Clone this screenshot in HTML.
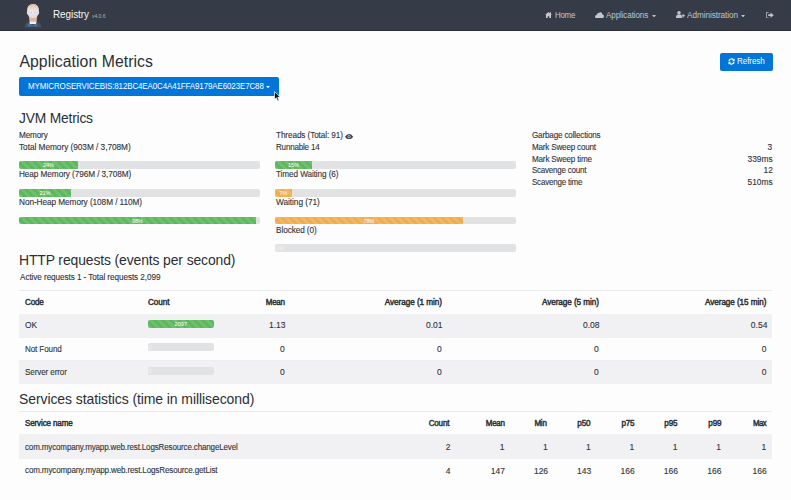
<!DOCTYPE html>
<html><head><meta charset="utf-8">
<style>
*{box-sizing:border-box;margin:0;padding:0}
html,body{width:791px;height:500px;overflow:hidden}
body{background:#fdfdfe;font-family:"Liberation Sans",sans-serif;position:relative}
.t{position:absolute;white-space:nowrap;line-height:0}
.s{-webkit-text-stroke:0.12px currentColor}
</style></head><body>
<div style="position:absolute;left:0px;top:0px;width:791px;height:30px;background:#353c47"></div>
<div style="position:absolute;left:0px;top:30px;width:791px;height:1px;background:#2b303a"></div>
<div style="position:absolute;left:720px;top:53px;width:53px;height:18px;background:#0275d8;border-radius:2px"></div>
<div style="position:absolute;left:19px;top:77px;width:260px;height:19px;background:#0275d8;border-radius:2px"></div>
<div style="position:absolute;left:19px;top:161px;width:241px;height:7.5px;background:#e1e2e4;border-radius:2px"></div>
<div style="position:absolute;left:19px;top:161px;width:59px;height:7.5px;background-color:#5cb85c;background-image:linear-gradient(45deg,rgba(255,255,255,.11) 25%,transparent 25%,transparent 50%,rgba(255,255,255,.11) 50%,rgba(255,255,255,.11) 75%,transparent 75%,transparent);background-size:8px 8px;border-radius:2px 0 0 2px"></div>
<div class="t" style="left:19px;width:59px;text-align:center;top:164.81px;font-size:5.6px;color:#fff">24%</div>
<div style="position:absolute;left:19px;top:189px;width:241px;height:7.5px;background:#e1e2e4;border-radius:2px"></div>
<div style="position:absolute;left:19px;top:189px;width:52px;height:7.5px;background-color:#5cb85c;background-image:linear-gradient(45deg,rgba(255,255,255,.11) 25%,transparent 25%,transparent 50%,rgba(255,255,255,.11) 50%,rgba(255,255,255,.11) 75%,transparent 75%,transparent);background-size:8px 8px;border-radius:2px 0 0 2px"></div>
<div class="t" style="left:19px;width:52px;text-align:center;top:192.81px;font-size:5.6px;color:#fff">21%</div>
<div style="position:absolute;left:19px;top:216.8px;width:241px;height:7.5px;background:#e1e2e4;border-radius:2px"></div>
<div style="position:absolute;left:19px;top:216.8px;width:237px;height:7.5px;background-color:#5cb85c;background-image:linear-gradient(45deg,rgba(255,255,255,.11) 25%,transparent 25%,transparent 50%,rgba(255,255,255,.11) 50%,rgba(255,255,255,.11) 75%,transparent 75%,transparent);background-size:8px 8px;border-radius:2px 0 0 2px"></div>
<div class="t" style="left:19px;width:237px;text-align:center;top:220.61px;font-size:5.6px;color:#fff">98%</div>
<div style="position:absolute;left:275px;top:161px;width:241px;height:7.5px;background:#e1e2e4;border-radius:2px"></div>
<div style="position:absolute;left:275px;top:161px;width:37px;height:7.5px;background-color:#5cb85c;background-image:linear-gradient(45deg,rgba(255,255,255,.11) 25%,transparent 25%,transparent 50%,rgba(255,255,255,.11) 50%,rgba(255,255,255,.11) 75%,transparent 75%,transparent);background-size:8px 8px;border-radius:2px 0 0 2px"></div>
<div class="t" style="left:275px;width:37px;text-align:center;top:164.81px;font-size:5.6px;color:#fff">15%</div>
<div style="position:absolute;left:275px;top:189px;width:241px;height:7.5px;background:#e1e2e4;border-radius:2px"></div>
<div style="position:absolute;left:275px;top:189px;width:17px;height:7.5px;background-color:#f0ad4e;background-image:linear-gradient(45deg,rgba(255,255,255,.11) 25%,transparent 25%,transparent 50%,rgba(255,255,255,.11) 50%,rgba(255,255,255,.11) 75%,transparent 75%,transparent);background-size:8px 8px;border-radius:2px 0 0 2px"></div>
<div class="t" style="left:275px;width:17px;text-align:center;top:192.81px;font-size:5.6px;color:#fff">7%</div>
<div style="position:absolute;left:275px;top:216.8px;width:241px;height:7.5px;background:#e1e2e4;border-radius:2px"></div>
<div style="position:absolute;left:275px;top:216.8px;width:188px;height:7.5px;background-color:#f0ad4e;background-image:linear-gradient(45deg,rgba(255,255,255,.11) 25%,transparent 25%,transparent 50%,rgba(255,255,255,.11) 50%,rgba(255,255,255,.11) 75%,transparent 75%,transparent);background-size:8px 8px;border-radius:2px 0 0 2px"></div>
<div class="t" style="left:275px;width:188px;text-align:center;top:220.61px;font-size:5.6px;color:#fff">78%</div>
<div style="position:absolute;left:275px;top:244.3px;width:241px;height:7.5px;background:#e1e2e4;border-radius:2px"></div>
<div class="t" style="left:276px;top:248.11px;font-size:5.6px;color:#f4f4f4">0%</div>
<div style="position:absolute;left:19px;top:290px;width:753px;height:1px;background:#e8eaed"></div>
<div style="position:absolute;left:19px;top:314px;width:753px;height:23.4px;background:#f1f1f3"></div>
<div style="position:absolute;left:19px;top:360.5px;width:753px;height:23.2px;background:#f1f1f3"></div>
<div style="position:absolute;left:19px;top:337.4px;width:753px;height:1px;background:#eef0f1"></div>
<div style="position:absolute;left:19px;top:359.6px;width:753px;height:1px;background:#eceef0"></div>
<div style="position:absolute;left:147.5px;top:319.9px;width:66.6px;height:8.1px;background:#e1e2e4;border-radius:2px"></div>
<div style="position:absolute;left:147.5px;top:319.9px;width:66.6px;height:8.1px;background-color:#5cb85c;background-image:linear-gradient(45deg,rgba(255,255,255,.11) 25%,transparent 25%,transparent 50%,rgba(255,255,255,.11) 50%,rgba(255,255,255,.11) 75%,transparent 75%,transparent);background-size:8px 8px;border-radius:2px"></div>
<div class="t" style="left:147.5px;width:66.6px;text-align:center;top:324.01px;font-size:5.6px;color:#fff">2097</div>
<div style="position:absolute;left:147.5px;top:343.29999999999995px;width:66.6px;height:8.1px;background:#e1e2e4;border-radius:2px"></div>
<div class="t" style="left:148.5px;top:347.41px;font-size:5.6px;color:#f4f4f4">0</div>
<div style="position:absolute;left:147.5px;top:366.7px;width:66.6px;height:8.1px;background:#e1e2e4;border-radius:2px"></div>
<div class="t" style="left:148.5px;top:370.81px;font-size:5.6px;color:#f4f4f4">0</div>
<div style="position:absolute;left:19px;top:411.3px;width:753px;height:1px;background:#e8eaed"></div>
<div style="position:absolute;left:19px;top:434px;width:753px;height:24.2px;background:#f1f1f3"></div>
<div style="position:absolute;left:19px;top:458px;width:753px;height:1px;background:#eef0f1"></div>
<svg style="position:absolute;left:22px;top:1px" width="24" height="28" viewBox="0 0 24 28"><path d="M2.5 26.5 Q3.5 21.5 7.5 20.5 L14.5 20.5 Q18.5 21.5 19.5 26.5Z" fill="#4a525e"/><path d="M6.8 14 L15.2 14 L14.6 21.5 L7.6 21.5Z" fill="#dcb7a6"/><path d="M7.6 20.7 L14.2 20.7 L14 23 L7.8 23Z" fill="#f2f2f2"/><path d="M6.2 22.8 L10.9 24.2 L14.8 22.8 L14.8 25.6 L10.9 24.6 L6.2 25.6Z" fill="#2c7fd6"/><ellipse cx="11" cy="10.3" rx="5.9" ry="7" fill="#eadbd6"/><path d="M5.2 9 Q5 3.2 11 3.2 Q17 3.2 16.8 9 Q15.5 6 11 6.2 Q6.5 6 5.2 9Z" fill="#e8ccb4"/><rect x="5.4" y="9.6" width="5.2" height="3.8" rx="1.2" fill="#d6dee8" stroke="#f2f2f2" stroke-width=".7"/><rect x="11.4" y="9.6" width="5.2" height="3.8" rx="1.2" fill="#d6dee8" stroke="#f2f2f2" stroke-width=".7"/><circle cx="9" cy="4.5" r=".7" fill="#f0b060"/><circle cx="13.5" cy="4" r=".7" fill="#f0b060"/><circle cx="11" cy="17.5" r=".6" fill="#e8a070"/></svg>
<svg style="position:absolute;left:545px;top:12px" width="7" height="6" viewBox="0 0 7 6"><path d="M3.5 0 L7 3 L6 3 L6 6 L4.3 6 L4.3 4.2 L2.7 4.2 L2.7 6 L1 6 L1 3 L0 3Z" fill="#c3c6ca"/><rect x="5" y="0.3" width="1" height="1.8" fill="#c3c6ca"/></svg>
<svg style="position:absolute;left:595px;top:11.8px" width="9" height="6.2" viewBox="0 0 9 6.2"><path d="M1.8 6.2 Q0 6.2 0 4.5 Q0 3 1.6 2.9 Q1.9 1 3.8 1.1 Q4.6 0 5.9 0.3 Q7.3 0.7 7.3 2.3 Q9 2.6 9 4.3 Q9 6.2 7 6.2Z" fill="#c3c6ca"/></svg>
<svg style="position:absolute;left:652px;top:14.8px" width="4.2" height="2.4" viewBox="0 0 4 2.4"><path d="M0 0 L4 0 L2 2.4Z" fill="#c3c6ca"/></svg>
<svg style="position:absolute;left:741px;top:14.8px" width="4.2" height="2.4" viewBox="0 0 4 2.4"><path d="M0 0 L4 0 L2 2.4Z" fill="#c3c6ca"/></svg>
<svg style="position:absolute;left:675.8px;top:11px" width="9.2" height="7.2" viewBox="0 0 9.2 7.2"><circle cx="3" cy="1.8" r="1.75" fill="#c3c6ca"/><path d="M0 7.2 Q0 3.8 2 3.6 L4 3.6 Q6 3.8 6 7.2Z" fill="#c3c6ca"/><path d="M6.6 3 L7.6 3 L7.6 4.3 L9.2 4.3 L9.2 5.3 L7.6 5.3 L7.6 6.5 L6.6 6.5 L6.6 5.3 L5.4 5.3 L5.4 4.3 L6.6 4.3Z" fill="#c3c6ca"/></svg>
<svg style="position:absolute;left:766.3px;top:11.9px" width="8" height="6.3" viewBox="0 0 8 6.3"><path d="M2.6 0.3 L1 0.3 Q0.3 0.3 0.3 1 L0.3 5.3 Q0.3 6 1 6 L2.6 6" stroke="#c3c6ca" stroke-width=".9" fill="none"/><path d="M2.2 2.3 L4.6 2.3 L4.6 0.6 L7.8 3.15 L4.6 5.7 L4.6 4 L2.2 4Z" fill="#c3c6ca"/></svg>
<svg style="position:absolute;left:727.8px;top:58px" width="7.1" height="7" viewBox="0 0 7 7"><path d="M0.9 3 A2.7 2.7 0 0 1 5.6 1.9" stroke="#fff" stroke-width="1.2" fill="none"/><path d="M6.6 0.5 L6.6 3.2 L3.9 3.2Z" fill="#fff"/><path d="M6.1 4 A2.7 2.7 0 0 1 1.4 5.1" stroke="#fff" stroke-width="1.2" fill="none"/><path d="M0.4 6.5 L0.4 3.8 L3.1 3.8Z" fill="#fff"/></svg>
<svg style="position:absolute;left:266.2px;top:85.6px" width="4" height="2.2" viewBox="0 0 4 2.2"><path d="M0 0 L4 0 L2 2.2Z" fill="#fff"/></svg>
<svg style="position:absolute;left:345px;top:133.6px" width="8.2" height="5.4" viewBox="0 0 8.2 5.4"><path d="M0 2.7 Q2 0 4.1 0 Q6.2 0 8.2 2.7 Q6.2 5.4 4.1 5.4 Q2 5.4 0 2.7Z" fill="#3d4248"/><circle cx="4.1" cy="2.7" r="1.5" fill="#fff"/><circle cx="4.1" cy="2.7" r="0.9" fill="#3d4248"/></svg>
<svg style="position:absolute;left:273.5px;top:90.5px" width="7" height="11" viewBox="0 0 7 11"><path d="M0.5 0.5 L0.5 8.5 L2.3 6.8 L3.7 10 L5 9.4 L3.7 6.3 L6.2 6.3Z" fill="#111" stroke="#fff" stroke-width=".7"/></svg>
<div class="t" style="left:52.81px;transform-origin:0 0;top:14.518px;font-size:10.05px;font-weight:normal;color:#f8f8f8;letter-spacing:-0.057px;transform:scaleX(0.9888);">Registry</div>
<div class="t" style="left:92.40px;transform-origin:0 0;top:16.198px;font-size:5.2px;font-weight:normal;color:#aeb2b7;letter-spacing:-0.061px;transform:scaleX(0.9783);">v4.0.6</div>
<div class="t" style="left:554.70px;transform-origin:0 0;top:15.124px;font-size:8.3px;font-weight:normal;color:#c3c6ca;letter-spacing:-0.306px;transform:scaleX(0.9582);">Home</div>
<div class="t" style="left:605.50px;transform-origin:0 0;top:15.124px;font-size:8.3px;font-weight:normal;color:#c3c6ca;letter-spacing:-0.115px;transform:scaleX(0.9718);">Applications</div>
<div class="t" style="left:687.30px;transform-origin:0 0;top:15.124px;font-size:8.3px;font-weight:normal;color:#c3c6ca;letter-spacing:-0.058px;transform:scaleX(0.9855);">Administration</div>
<div class="t" style="left:19.40px;transform-origin:0 0;top:61.525px;font-size:15.8px;font-weight:normal;color:#2b2f33;letter-spacing:0.056px;">Application Metrics</div>
<div class="t" style="left:736.80px;transform-origin:0 0;top:62.159px;font-size:8.2px;font-weight:normal;color:#fff;letter-spacing:-0.076px;transform:scaleX(0.9838);">Refresh</div>
<div class="t" style="left:28.00px;transform-origin:0 0;top:87.159px;font-size:8.2px;font-weight:normal;color:#fff;letter-spacing:-0.129px;transform:scaleX(0.9745);">MYMICROSERVICEBIS:812BC4EA0C4A41FFA9179AE6023E7C88</div>
<div class="t" style="left:19.20px;transform-origin:0 0;top:118.080px;font-size:14.2px;font-weight:normal;color:#2b2f33;letter-spacing:-0.203px;transform:scaleX(0.9740);">JVM Metrics</div>
<div class="t s" style="left:19.20px;transform-origin:0 0;top:135.089px;font-size:8.4px;font-weight:normal;color:#303439;letter-spacing:-0.152px;transform:scaleX(0.9747);">Memory</div>
<div class="t s" style="left:19.20px;transform-origin:0 0;top:147.089px;font-size:8.4px;font-weight:normal;color:#303439;letter-spacing:-0.043px;transform:scaleX(0.9899);">Total Memory (903M / 3,708M)</div>
<div class="t s" style="left:19.20px;transform-origin:0 0;top:174.089px;font-size:8.4px;font-weight:normal;color:#303439;letter-spacing:-0.078px;transform:scaleX(0.9826);">Heap Memory (796M / 3,708M)</div>
<div class="t s" style="left:19.20px;transform-origin:0 0;top:202.089px;font-size:8.4px;font-weight:normal;color:#303439;letter-spacing:-0.068px;transform:scaleX(0.9849);">Non-Heap Memory (108M / 110M)</div>
<div class="t s" style="left:275.80px;transform-origin:0 0;top:135.089px;font-size:8.4px;font-weight:normal;color:#303439;letter-spacing:-0.093px;transform:scaleX(0.9761);">Threads (Total: 91)</div>
<div class="t s" style="left:275.80px;transform-origin:0 0;top:147.089px;font-size:8.4px;font-weight:normal;color:#303439;letter-spacing:-0.194px;transform:scaleX(0.9587);">Runnable 14</div>
<div class="t s" style="left:275.80px;transform-origin:0 0;top:174.089px;font-size:8.4px;font-weight:normal;color:#303439;letter-spacing:-0.095px;transform:scaleX(0.9767);">Timed Waiting (6)</div>
<div class="t s" style="left:275.50px;transform-origin:0 0;top:202.089px;font-size:8.4px;font-weight:normal;color:#303439;letter-spacing:-0.046px;transform:scaleX(0.9888);">Waiting (71)</div>
<div class="t s" style="left:275.50px;transform-origin:0 0;top:230.089px;font-size:8.4px;font-weight:normal;color:#303439;letter-spacing:-0.081px;transform:scaleX(0.9808);">Blocked (0)</div>
<div class="t s" style="left:531.80px;transform-origin:0 0;top:135.089px;font-size:8.4px;font-weight:normal;color:#303439;letter-spacing:-0.153px;transform:scaleX(0.9628);">Garbage collections</div>
<div class="t s" style="left:531.80px;transform-origin:0 0;top:147.089px;font-size:8.4px;font-weight:normal;color:#303439;letter-spacing:-0.180px;transform:scaleX(0.9614);">Mark Sweep count</div>
<div class="t s" style="right:18.83px;transform-origin:100% 0;top:147.089px;font-size:8.4px;font-weight:normal;color:#303439;">3</div>
<div class="t s" style="left:531.80px;transform-origin:0 0;top:159.089px;font-size:8.4px;font-weight:normal;color:#303439;letter-spacing:-0.175px;transform:scaleX(0.9624);">Mark Sweep time</div>
<div class="t s" style="right:18.36px;transform-origin:100% 0;top:159.089px;font-size:8.4px;font-weight:normal;color:#303439;">339ms</div>
<div class="t s" style="left:531.80px;transform-origin:0 0;top:170.089px;font-size:8.4px;font-weight:normal;color:#303439;letter-spacing:-0.225px;transform:scaleX(0.9513);">Scavenge count</div>
<div class="t s" style="right:18.17px;transform-origin:100% 0;top:170.089px;font-size:8.4px;font-weight:normal;color:#303439;">12</div>
<div class="t s" style="left:531.80px;transform-origin:0 0;top:182.089px;font-size:8.4px;font-weight:normal;color:#303439;letter-spacing:-0.213px;transform:scaleX(0.9535);">Scavenge time</div>
<div class="t s" style="right:18.36px;transform-origin:100% 0;top:182.089px;font-size:8.4px;font-weight:normal;color:#303439;">510ms</div>
<div class="t" style="left:18.52px;transform-origin:0 0;top:260.080px;font-size:14.2px;font-weight:normal;color:#2b2f33;letter-spacing:-0.126px;transform:scaleX(0.9819);">HTTP requests (events per second)</div>
<div class="t s" style="left:19.50px;transform-origin:0 0;top:277.089px;font-size:8.4px;font-weight:normal;color:#303439;letter-spacing:-0.084px;transform:scaleX(0.9776);">Active requests 1 - Total requests 2,099</div>
<div class="t" style="left:24.70px;transform-origin:0 0;top:302.124px;font-size:8.3px;font-weight:normal;-webkit-text-stroke:0.45px currentColor;color:#2c3035;letter-spacing:-0.169px;transform:scaleX(0.9747);">Code</div>
<div class="t" style="left:147.50px;transform-origin:0 0;top:302.124px;font-size:8.3px;font-weight:normal;-webkit-text-stroke:0.45px currentColor;color:#2c3035;letter-spacing:-0.088px;transform:scaleX(0.9847);">Count</div>
<div class="t" style="right:506.47px;transform-origin:100% 0;top:302.124px;font-size:8.3px;font-weight:normal;-webkit-text-stroke:0.45px currentColor;color:#2c3035;letter-spacing:-0.255px;transform:scaleX(0.9636);">Mean</div>
<div class="t" style="right:349.28px;transform-origin:100% 0;top:302.124px;font-size:8.3px;font-weight:normal;-webkit-text-stroke:0.45px currentColor;color:#2c3035;letter-spacing:-0.061px;transform:scaleX(0.9855);">Average (1 min)</div>
<div class="t" style="right:192.19px;transform-origin:100% 0;top:302.124px;font-size:8.3px;font-weight:normal;-webkit-text-stroke:0.45px currentColor;color:#2c3035;letter-spacing:-0.072px;transform:scaleX(0.9829);">Average (5 min)</div>
<div class="t" style="right:24.76px;transform-origin:100% 0;top:302.124px;font-size:8.3px;font-weight:normal;-webkit-text-stroke:0.45px currentColor;color:#2c3035;letter-spacing:-0.074px;transform:scaleX(0.9827);">Average (15 min)</div>
<div class="t s" style="left:25.10px;transform-origin:0 0;top:325.124px;font-size:8.3px;font-weight:normal;color:#303439;">OK</div>
<div class="t s" style="right:505.45px;transform-origin:100% 0;top:325.055px;font-size:8.5px;font-weight:normal;color:#303439;">1.13</div>
<div class="t s" style="right:348.55px;transform-origin:100% 0;top:325.055px;font-size:8.5px;font-weight:normal;color:#303439;">0.01</div>
<div class="t s" style="right:191.45px;transform-origin:100% 0;top:325.055px;font-size:8.5px;font-weight:normal;color:#303439;">0.08</div>
<div class="t s" style="right:23.65px;transform-origin:100% 0;top:325.055px;font-size:8.5px;font-weight:normal;color:#303439;">0.54</div>
<div class="t s" style="left:25.10px;transform-origin:0 0;top:349.124px;font-size:8.3px;font-weight:normal;color:#303439;letter-spacing:-0.127px;transform:scaleX(0.9740);">Not Found</div>
<div class="t s" style="right:506.27px;transform-origin:100% 0;top:349.055px;font-size:8.5px;font-weight:normal;color:#303439;">0</div>
<div class="t s" style="right:349.37px;transform-origin:100% 0;top:349.055px;font-size:8.5px;font-weight:normal;color:#303439;">0</div>
<div class="t s" style="right:192.27px;transform-origin:100% 0;top:349.055px;font-size:8.5px;font-weight:normal;color:#303439;">0</div>
<div class="t s" style="right:24.47px;transform-origin:100% 0;top:349.055px;font-size:8.5px;font-weight:normal;color:#303439;">0</div>
<div class="t s" style="left:25.10px;transform-origin:0 0;top:372.124px;font-size:8.3px;font-weight:normal;color:#303439;letter-spacing:-0.106px;transform:scaleX(0.9735);">Server error</div>
<div class="t s" style="right:506.27px;transform-origin:100% 0;top:372.055px;font-size:8.5px;font-weight:normal;color:#303439;">0</div>
<div class="t s" style="right:349.37px;transform-origin:100% 0;top:372.055px;font-size:8.5px;font-weight:normal;color:#303439;">0</div>
<div class="t s" style="right:192.27px;transform-origin:100% 0;top:372.055px;font-size:8.5px;font-weight:normal;color:#303439;">0</div>
<div class="t s" style="right:24.47px;transform-origin:100% 0;top:372.055px;font-size:8.5px;font-weight:normal;color:#303439;">0</div>
<div class="t" style="left:18.51px;transform-origin:0 0;top:399.080px;font-size:14.2px;font-weight:normal;color:#2b2f33;letter-spacing:-0.084px;transform:scaleX(0.9859);">Services statistics (time in millisecond)</div>
<div class="t" style="left:25.20px;transform-origin:0 0;top:423.124px;font-size:8.3px;font-weight:normal;-webkit-text-stroke:0.45px currentColor;color:#2c3035;letter-spacing:-0.138px;transform:scaleX(0.9701);">Service name</div>
<div class="t" style="right:341.31px;transform-origin:100% 0;top:423.124px;font-size:8.3px;font-weight:normal;-webkit-text-stroke:0.45px currentColor;color:#2c3035;letter-spacing:-0.178px;transform:scaleX(0.9691);">Count</div>
<div class="t" style="right:286.79px;transform-origin:100% 0;top:423.124px;font-size:8.3px;font-weight:normal;-webkit-text-stroke:0.45px currentColor;color:#2c3035;letter-spacing:-0.272px;transform:scaleX(0.9612);">Mean</div>
<div class="t" style="right:243.95px;transform-origin:100% 0;top:423.124px;font-size:8.3px;font-weight:normal;-webkit-text-stroke:0.45px currentColor;color:#2c3035;letter-spacing:-0.255px;transform:scaleX(0.9636);">Min</div>
<div class="t" style="right:200.20px;transform-origin:100% 0;top:423.124px;font-size:8.3px;font-weight:normal;-webkit-text-stroke:0.45px currentColor;color:#2c3035;letter-spacing:-0.152px;transform:scaleX(0.9783);">p50</div>
<div class="t" style="right:156.85px;transform-origin:100% 0;top:423.124px;font-size:8.3px;font-weight:normal;-webkit-text-stroke:0.45px currentColor;color:#2c3035;letter-spacing:-0.203px;transform:scaleX(0.9710);">p75</div>
<div class="t" style="right:113.53px;transform-origin:100% 0;top:423.124px;font-size:8.3px;font-weight:normal;-webkit-text-stroke:0.45px currentColor;color:#2c3035;letter-spacing:-0.177px;transform:scaleX(0.9747);">p95</div>
<div class="t" style="right:70.13px;transform-origin:100% 0;top:423.124px;font-size:8.3px;font-weight:normal;-webkit-text-stroke:0.45px currentColor;color:#2c3035;letter-spacing:-0.177px;transform:scaleX(0.9747);">p99</div>
<div class="t" style="right:25.18px;transform-origin:100% 0;top:423.124px;font-size:8.3px;font-weight:normal;-webkit-text-stroke:0.45px currentColor;color:#2c3035;letter-spacing:-0.517px;transform:scaleX(0.9354);">Max</div>
<div class="t s" style="left:24.60px;transform-origin:0 0;top:447.124px;font-size:8.3px;font-weight:normal;color:#303439;letter-spacing:-0.150px;transform:scaleX(0.9659);">com.mycompany.myapp.web.rest.LogsResource.changeLevel</div>
<div class="t s" style="right:340.57px;transform-origin:100% 0;top:447.055px;font-size:8.5px;font-weight:normal;color:#303439;">2</div>
<div class="t s" style="right:286.57px;transform-origin:100% 0;top:447.055px;font-size:8.5px;font-weight:normal;color:#303439;">1</div>
<div class="t s" style="right:243.37px;transform-origin:100% 0;top:447.055px;font-size:8.5px;font-weight:normal;color:#303439;">1</div>
<div class="t s" style="right:200.17px;transform-origin:100% 0;top:447.055px;font-size:8.5px;font-weight:normal;color:#303439;">1</div>
<div class="t s" style="right:156.77px;transform-origin:100% 0;top:447.055px;font-size:8.5px;font-weight:normal;color:#303439;">1</div>
<div class="t s" style="right:113.47px;transform-origin:100% 0;top:447.055px;font-size:8.5px;font-weight:normal;color:#303439;">1</div>
<div class="t s" style="right:70.07px;transform-origin:100% 0;top:447.055px;font-size:8.5px;font-weight:normal;color:#303439;">1</div>
<div class="t s" style="right:24.67px;transform-origin:100% 0;top:447.055px;font-size:8.5px;font-weight:normal;color:#303439;">1</div>
<div class="t s" style="left:24.60px;transform-origin:0 0;top:470.124px;font-size:8.3px;font-weight:normal;color:#303439;letter-spacing:-0.138px;transform:scaleX(0.9679);">com.mycompany.myapp.web.rest.LogsResource.getList</div>
<div class="t s" style="right:340.57px;transform-origin:100% 0;top:471.055px;font-size:8.5px;font-weight:normal;color:#303439;">4</div>
<div class="t s" style="right:286.11px;transform-origin:100% 0;top:471.055px;font-size:8.5px;font-weight:normal;color:#303439;">147</div>
<div class="t s" style="right:242.91px;transform-origin:100% 0;top:471.055px;font-size:8.5px;font-weight:normal;color:#303439;">126</div>
<div class="t s" style="right:199.71px;transform-origin:100% 0;top:471.055px;font-size:8.5px;font-weight:normal;color:#303439;">143</div>
<div class="t s" style="right:156.31px;transform-origin:100% 0;top:471.055px;font-size:8.5px;font-weight:normal;color:#303439;">166</div>
<div class="t s" style="right:113.01px;transform-origin:100% 0;top:471.055px;font-size:8.5px;font-weight:normal;color:#303439;">166</div>
<div class="t s" style="right:69.61px;transform-origin:100% 0;top:471.055px;font-size:8.5px;font-weight:normal;color:#303439;">166</div>
<div class="t s" style="right:24.21px;transform-origin:100% 0;top:471.055px;font-size:8.5px;font-weight:normal;color:#303439;">166</div>
</body></html>
